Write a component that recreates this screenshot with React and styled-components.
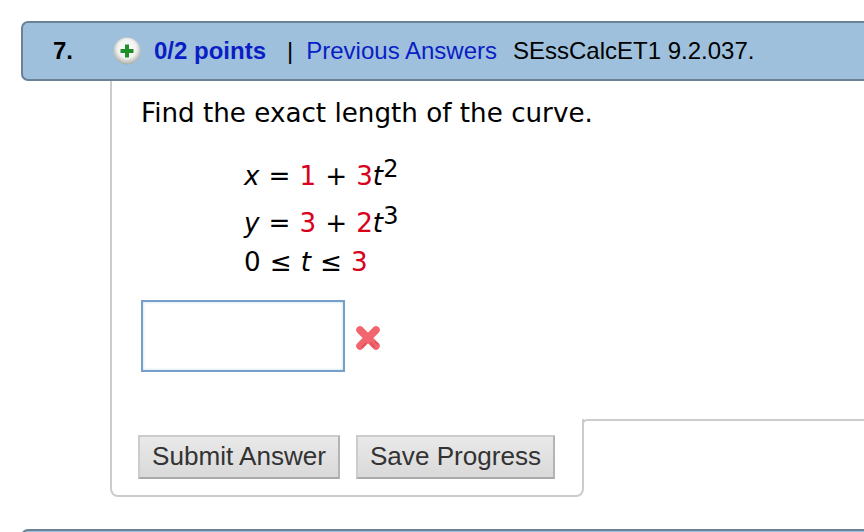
import React from "react";
import styled, { createGlobalStyle } from "styled-components";

const Global = createGlobalStyle`
  html, body { margin: 0; padding: 0; background: #fff; }
  body { width: 864px; height: 532px; overflow: hidden; }
`;

const Page = styled.div`
  width: 864px;
  height: 532px;
  overflow: hidden;
  box-sizing: border-box;
  padding: 21px 0 0 21px;
`;

const HeaderBar = styled.header`
  box-sizing: border-box;
  height: 60px;
  display: flex;
  align-items: center;
  background: #9ec0dc;
  border: 2px solid #6b8196;
  border-right: none;
  border-radius: 7px 0 0 7px;
  font-family: "Liberation Sans", Arial, sans-serif;
  font-size: 24px;
  color: #000;
`;

const Number = styled.strong`
  width: 90px;
  padding-left: 30px;
  box-sizing: border-box;
`;

const StatusIcon = styled.svg`
  width: 28px;
  height: 28px;
  margin-right: 13px;
  flex: none;
`;

const Points = styled.strong`
  color: #0a1ec6;
`;

const Divider = styled.span`
  margin: 0 13px 0 21px;
`;

const AnswersLink = styled.a`
  color: #0a1ec6;
`;

const Source = styled.span`
  margin-left: 16px;
`;

const Body = styled.div`
  display: grid;
  grid-template-columns: 474px 1fr;
  grid-template-rows: 338px 78px;
  margin-left: 89px;
`;

const Question = styled.section`
  grid-column: 1 / 3;
  box-sizing: border-box;
  border-left: 2px solid #ccc;
  padding: 15px 0 0 29px;
  font-family: "DejaVu Sans", Verdana, sans-serif;
  font-size: 26.2px;
  color: #000;
`;

const Prompt = styled.p`
  margin: 0 0 22px;
  line-height: 34px;
`;

const Formula = styled.div`
  margin-left: 103px;
  word-spacing: 0.7px;
`;

const FormulaLine = styled.div`
  height: ${(p) => p.$h}px;
  line-height: ${(p) => p.$h}px;
  white-space: pre;
`;

const Var = styled.i`
  font-style: italic;
`;

const Red = styled.span`
  color: #d9001b;
`;

const Sup = styled.sup`
  font-size: 24px;
  line-height: 0;
  vertical-align: 8px;
`;

const AnswerRow = styled.div`
  display: flex;
  align-items: center;
  gap: 8px;
  margin-top: 21px;
`;

const AnswerInput = styled.input`
  box-sizing: border-box;
  width: 204px;
  height: 72px;
  border: 2px solid #75a0c8;
  box-shadow: inset 0 0 3px #bcd6ee;
  background: #fff;
  outline: none;
  padding: 0;
`;

const WrongIcon = styled.svg`
  width: 30px;
  height: 30px;
  margin-top: 4px;
  flex: none;
`;

const Actions = styled.div`
  box-sizing: border-box;
  border: 2px solid #ccc;
  border-top: none;
  border-radius: 0 0 8px 8px;
  padding: 16px 0 0 26px;
  display: flex;
  gap: 16px;
  align-items: flex-start;
`;

const Button = styled.button`
  box-sizing: border-box;
  height: 44px;
  width: ${(p) => p.$w}px;
  padding: 0 0 2px;
  background: linear-gradient(#e9e9e9, #d9d9d9);
  border: 2px solid #cccccc;
  border-bottom-color: #aaaaaa;
  border-right-color: #b4b4b4;
  border-radius: 0;
  font-family: "Liberation Sans", Arial, sans-serif;
  font-size: 26.1px;
  color: #333;
`;

const Tail = styled.div`
  height: 12px;
  margin-left: -2px;
  border-top: 2px solid #ccc;
  border-left: 2px solid #ccc;
  border-top-left-radius: 5px;
`;

const NextHeader = styled.div`
  height: 40px;
  margin-top: 32px;
  background: #9ec0dc;
  border: 2px solid #6b8196;
  border-right: none;
  border-radius: 7px 0 0 0;
`;

export default function App() {
  return (
    <Page>
      <Global />
      <HeaderBar>
        <Number>7.</Number>
        <StatusIcon viewBox="0 0 28 28" aria-hidden="true">
          <defs>
            <radialGradient id="disc" cx="50%" cy="42%" r="58%">
              <stop offset="0%" stopColor="#ffffff" />
              <stop offset="60%" stopColor="#f2f2f0" />
              <stop offset="100%" stopColor="#a9aca6" />
            </radialGradient>
          </defs>
          <circle cx="14" cy="14" r="13.5" fill="url(#disc)" />
          <path d="M14 7.5v13M7.5 14h13" stroke="#1f8f2a" strokeWidth="4" />
        </StatusIcon>
        <Points>0/2 points</Points>
        <Divider>|</Divider>
        <AnswersLink>Previous Answers</AnswersLink>
        <Source>SEssCalcET1 9.2.037.</Source>
      </HeaderBar>
      <Body>
        <Question>
          <Prompt>Find the exact length of the curve.</Prompt>
          <Formula>
            <FormulaLine $h={49}>
              <Var>x</Var> = <Red>1</Red> + <Red>3</Red><Var>t</Var><Sup>2</Sup>
            </FormulaLine>
            <FormulaLine $h={44}>
              <Var>y</Var> = <Red>3</Red> + <Red>2</Red><Var>t</Var><Sup>3</Sup>
            </FormulaLine>
            <FormulaLine $h={34}>
              0 ≤ <Var>t</Var> ≤ <Red>3</Red>
            </FormulaLine>
          </Formula>
          <AnswerRow>
            <AnswerInput type="text" />
            <WrongIcon viewBox="0 0 30 30" aria-hidden="true">
              <path d="M7 7l16 16M23 7L7 23" stroke="#f0656e" strokeWidth="7.5" strokeLinecap="round" />
              <path d="M9 24l4-4M21 24l-3-4M25 21l-3-2" stroke="#d94f59" strokeWidth="1.5" strokeLinecap="round" />
            </WrongIcon>
          </AnswerRow>
        </Question>
        <Actions>
          <Button $w={202}>Submit Answer</Button>
          <Button $w={199}>Save Progress</Button>
        </Actions>
        <Tail />
      </Body>
      <NextHeader />
    </Page>
  );
}
